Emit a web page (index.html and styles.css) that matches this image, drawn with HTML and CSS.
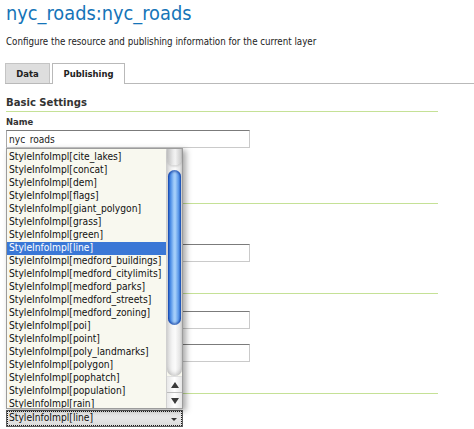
FILE: index.html
```html
<!DOCTYPE html>
<html>
<head>
<meta charset="utf-8">
<title>nyc_roads:nyc_roads</title>
<link rel="stylesheet" href="styles.css">
</head>
<body>
<div class="page">
  <h1 class="title">nyc_roads:nyc_roads</h1>
  <p class="desc">Configure the resource and publishing information for the current layer</p>

  <ul class="tabs">
    <li class="tab tab-data">Data</li>
    <li class="tab tab-pub">Publishing</li>
  </ul>

  <form class="form">
    <h2 class="sec sec-first">Basic Settings</h2>
    <label class="lbl lbl-first">Name</label>
    <input class="txt" type="text" value="nyc_roads">
    <div class="checks">
      <input class="cb" type="checkbox" checked>
      <input class="cb" type="checkbox" checked>
    </div>

    <div class="rule rule-http"></div>
    <div class="gap gap-http"></div>
    <input class="txt" type="text" value="">

    <div class="rule rule-attr"></div>
    <div class="gap gap-a"></div>
    <input class="txt" type="text" value="">
    <div class="gap gap-b"></div>
    <input class="txt" type="text" value="">

    <div class="rule rule-wms"></div>
    <div class="gap gap-style"></div>
    <div class="sel">
      <div class="sel-in">StyleInfoImpl[line]</div>
      <span class="sel-arrow"></span>
    </div>
  </form>

  <div class="popup">
    <ul class="opts">
      <li class="opt opt-first"></li>
      <li class="opt">StyleInfoImpl[cite_lakes]</li>
      <li class="opt">StyleInfoImpl[concat]</li>
      <li class="opt">StyleInfoImpl[dem]</li>
      <li class="opt">StyleInfoImpl[flags]</li>
      <li class="opt">StyleInfoImpl[giant_polygon]</li>
      <li class="opt">StyleInfoImpl[grass]</li>
      <li class="opt">StyleInfoImpl[green]</li>
      <li class="opt opt-sel">StyleInfoImpl[line]</li>
      <li class="opt">StyleInfoImpl[medford_buildings]</li>
      <li class="opt">StyleInfoImpl[medford_citylimits]</li>
      <li class="opt">StyleInfoImpl[medford_parks]</li>
      <li class="opt">StyleInfoImpl[medford_streets]</li>
      <li class="opt">StyleInfoImpl[medford_zoning]</li>
      <li class="opt">StyleInfoImpl[poi]</li>
      <li class="opt">StyleInfoImpl[point]</li>
      <li class="opt">StyleInfoImpl[poly_landmarks]</li>
      <li class="opt">StyleInfoImpl[polygon]</li>
      <li class="opt">StyleInfoImpl[pophatch]</li>
      <li class="opt">StyleInfoImpl[population]</li>
      <li class="opt">StyleInfoImpl[rain]</li>
    </ul>
    <div class="sb">
      <div class="track">
        <div class="cap"></div>
        <div class="thumb"></div>
      </div>
      <div class="arr arr-up"><span class="tri-up"></span></div>
      <div class="arr arr-down"><span class="tri-down"></span></div>
    </div>
  </div>
</div>
</body>
</html>
```
FILE: styles.css
```css
html, body {
  margin: 0;
  padding: 0;
  background: #fff;
}
body {
  font-family: "DejaVu Sans Condensed", "DejaVu Sans", sans-serif;
  color: #222;
  overflow: hidden;
}
.page {
  position: relative;
  padding-left: 6px;
  height: 429px;
  overflow: hidden;
}
.title {
  margin: 2px 0 0;
  font-size: 19.8px;
  line-height: 24px;
  font-weight: normal;
  color: #1574b8;
}
.desc {
  margin: 10px 0 0;
  font-size: 9.7px;
  line-height: 12px;
  color: #222;
}
.tabs {
  list-style: none;
  margin: 15px 0 0 -1px;
  padding: 0;
  display: flex;
  align-items: flex-start;
  gap: 2px;
  height: 20px;
  border-bottom: 1px solid #b9b9b9;
}
.tab {
  box-sizing: border-box;
  font-size: 9.4px;
  font-weight: bold;
  line-height: 19px;
  text-align: center;
  color: #222;
  border: 1px solid #c4c4c4;
  border-bottom: none;
}
.tab-data {
  width: 45px;
  height: 20px;
  background: #dedede;
}
.tab-pub {
  width: 73px;
  height: 21px;
  background: #fff;
  border-color: #b9b9b9;
}
.form {
  margin: 0;
  width: 432px;
}
.sec {
  margin: 12px 0 0;
  font-size: 11.2px;
  line-height: 14px;
  font-weight: bold;
  color: #333;
  padding-bottom: 1px;
  border-bottom: 1px solid #c5e196;
}
.lbl {
  display: block;
  font-size: 9.4px;
  line-height: 12px;
  font-weight: bold;
  color: #333;
  margin-top: 4px;
}
.txt {
  display: block;
  box-sizing: border-box;
  width: 244px;
  height: 18px;
  margin: 2px 0 0;
  padding: 0 2px;
  border: 1px solid #cacaca;
  border-top-color: #7b7b7b;
  border-left-color: #a8a8a8;
  font-family: inherit;
  font-size: 10.1px;
  line-height: normal;
  color: #222;
  background: #fff;
  outline: none;
}
.checks {
  margin-top: 1px;
  height: 26px;
}
.cb { display: block; margin: 2px 0 0; width: 9px; height: 9px; }
.rule {
  border-bottom: 1px solid #c5e196;
}
.rule-http { margin-top: 27px; }
.rule-attr { margin-top: 31px; }
.rule-wms { margin-top: 31px; }
.gap-http { height: 38px; }
.gap-a { height: 15px; }
.gap-b { height: 13px; }
.gap-style { height: 14px; }
.gap-http, .gap-a, .gap-b, .gap-style { margin-bottom: 2px; }
.gap-http { height: 38px; }
.sel {
  position: relative;
  box-sizing: border-box;
  width: 177px;
  height: 17px;
  border: 1px solid #5f5f5f;
  background: linear-gradient(#f2f2f2, #dadada);
}
.sel-in {
  box-sizing: border-box;
  height: 100%;
  border: 1px dotted #1a1a1a;
  font-size: 10.2px;
  line-height: 12px;
  padding-left: 1px;
  color: #111;
}
.sel-arrow {
  position: absolute;
  right: 5px;
  top: 7px;
  width: 0;
  height: 0;
  border-left: 3px solid transparent;
  border-right: 3px solid transparent;
  border-top: 3px solid #333;
}

/* dropdown popup */
.popup {
  position: absolute;
  left: 6px;
  top: 148px;
  box-sizing: border-box;
  width: 177px;
  height: 261px;
  border: 1px solid #9c9c9c;
  background: #f8f8ef;
  display: flex;
  box-shadow: 3px 2px 6px rgba(0, 0, 0, 0.35);
}
.opts {
  list-style: none;
  margin: 0;
  padding: 0;
  flex: 1;
  overflow: hidden;
}
.opt {
  height: 11px;
  line-height: 11px;
  padding: 0 0 2px 2px;
  font-size: 10.2px;
  white-space: nowrap;
  color: #111;
}
.opt-first {
  margin-top: -11px;
  position: relative;
}
.opt-first::after {
  content: "";
  position: absolute;
  left: 2px;
  top: 9px;
  width: 112px;
  height: 2px;
  background: repeating-linear-gradient(to right, #666 0 1px, transparent 1px 4px, #888 4px 5px, transparent 5px 9px);
  opacity: 0.55;
}
.opt-sel {
  background: #3a77d6;
  color: #fff;
}
.sb {
  width: 15px;
  display: flex;
  flex-direction: column;
  border-left: 1px solid #d0d0d0;
}
.track {
  flex: 1;
  border-radius: 0 0 7px 7px;
  background: linear-gradient(to right, #d6d6d6, #f4f4f4 35%, #fbfbfb 55%, #e4e4e4 85%, #cfcfcf);
  box-shadow: inset 0 -4px 4px -2px rgba(0, 0, 0, 0.18);
}
.cap {
  height: 16px;
  border-radius: 0 0 7px 7px;
  background: linear-gradient(to right, #bdbdbd, #e9e9e9 40%, #f3f3f3 55%, #cfcfcf 90%, #b5b5b5);
  box-shadow: 0 2px 2px rgba(0, 0, 0, 0.12);
}
.thumb {
  margin: 5px 1px 0;
  height: 155px;
  border-radius: 7px;
  background: linear-gradient(to right, #1f58c2, #4f8fe6 20%, #9ecaf9 45%, #a8d0fa 55%, #5e9bea 80%, #2461c6);
  box-shadow: inset 0 2px 2px rgba(0, 40, 140, 0.5), inset 0 -2px 2px rgba(0, 40, 140, 0.5);
}
.arr {
  height: 15px;
  display: flex;
  align-items: center;
  justify-content: center;
  background: linear-gradient(to right, #e8e8e8, #ffffff 50%, #e6e6e6);
}
.arr-up { border-top: 1px solid #e0e0e0; }
.arr-down { border-top: 1px solid #bcbcbc; }
.tri-up, .tri-down {
  width: 0;
  height: 0;
  border-left: 4px solid transparent;
  border-right: 4px solid transparent;
}
.tri-up { border-bottom: 6px solid #3a3a3a; }
.tri-down { border-top: 6px solid #3a3a3a; }
```
